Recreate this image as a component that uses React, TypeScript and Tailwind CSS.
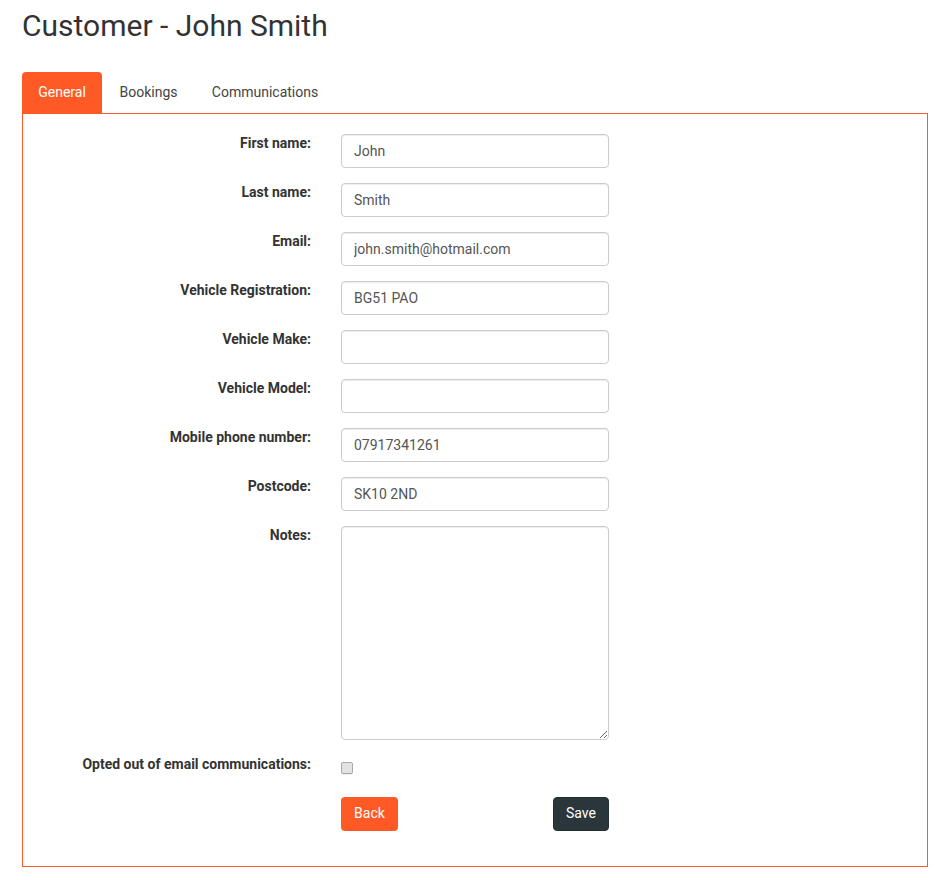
import React from "react";

const fields = [
  { label: "First name:", value: "John" },
  { label: "Last name:", value: "Smith" },
  { label: "Email:", value: "john.smith@hotmail.com" },
  { label: "Vehicle Registration:", value: "BG51 PAO" },
  { label: "Vehicle Make:", value: "" },
  { label: "Vehicle Model:", value: "" },
  { label: "Mobile phone number:", value: "07917341261" },
  { label: "Postcode:", value: "SK10 2ND" },
];

const labelClass = "w-[288px] -mt-[1px] text-right font-bold leading-5 text-[#333333]";
const controlClass =
  "w-[268px] rounded-[4px] border border-[#cccccc] bg-white px-3 text-sm text-[#555555] shadow-[inset_0_1px_1px_rgba(0,0,0,0.075)] outline-none";

const App: React.FC = () => {
  return (
    <div className="w-[947px] h-[880px] overflow-hidden bg-white px-[22px] font-['Roboto',sans-serif] text-sm text-[#333333]">
      <h1 className="h-[72px] pt-[8px] text-[30px] leading-[36px] font-normal text-[#333333]">
        Customer - John Smith
      </h1>

      <div className="flex h-[41px] text-sm">
        <a className="flex w-[80px] items-center justify-center rounded-t-[4px] bg-[#ff5a26] pb-[2px] text-white">General</a>
        <a className="flex w-[93px] items-center justify-center pb-[2px] text-[#444444]">Bookings</a>
        <a className="flex w-[140px] items-center justify-center pb-[2px] text-[#444444]">Communications</a>
      </div>

      <div className="h-[754px] w-[906px] border border-[#ff5a26] pt-[20px]">
        {fields.map((f) => (
          <div key={f.label} className="mb-[15px] flex h-[34px] gap-[30px]">
            <label className={labelClass}>{f.label}</label>
            <input type="text" defaultValue={f.value} className={controlClass + " h-[34px]"} />
          </div>
        ))}

        <div className="mb-[15px] flex h-[214px] gap-[30px]">
          <label className={labelClass}>Notes:</label>
          <textarea className={controlClass + " h-[214px] py-[6px]"} />
        </div>

        <div className="flex h-[42px] gap-[30px]">
          <label className={labelClass}>Opted out of email communications:</label>
          <input
            type="checkbox"
            className="mt-[7px] h-[12px] w-[12px] appearance-none self-start rounded-[2px] border border-[#a9a9a9] bg-[#e2e2e2] shadow-[0_1px_0_rgba(0,0,0,0.08)]"
          />
        </div>

        <div className="flex gap-[30px]">
          <div className="w-[288px]" />
          <div className="flex w-[268px] justify-between">
            <button className="h-[34px] w-[57px] rounded-[4px] bg-[#ff5a26] pb-[2px] text-sm text-white">Back</button>
            <button className="h-[34px] w-[56px] rounded-[4px] border border-[#232d32] bg-[#2b363b] pb-[2px] text-sm text-white">Save</button>
          </div>
        </div>
      </div>
    </div>
  );
};

export default App;
